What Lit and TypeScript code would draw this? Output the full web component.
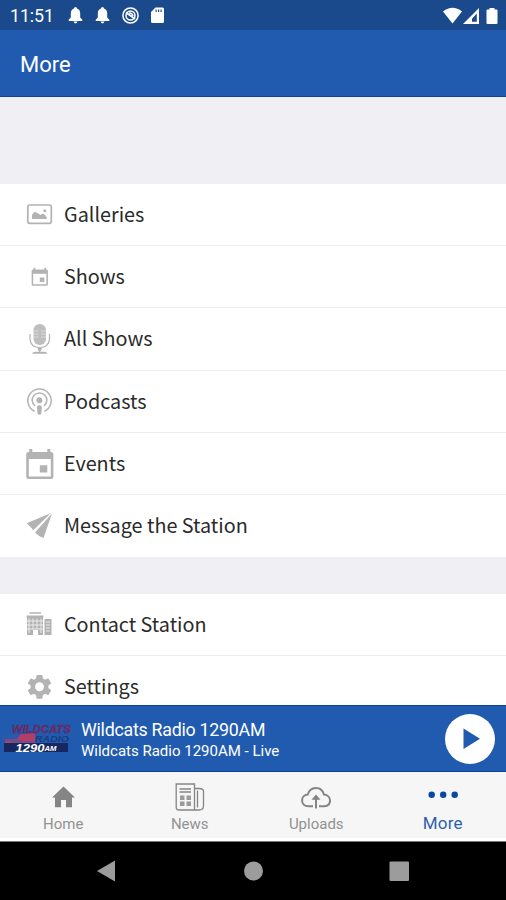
import { LitElement, html, css, svg } from "lit";
import { customElement } from "lit/decorators.js";

// Menu icons share a 40x40 box whose origin is its centre.
const calendar = svg`<path fill-rule="evenodd" d="M-10.5-15h3v3h15v-3h3v3h.6Q13.600-12 13.600-9.500V12.500Q13.600 15 11 15H-11Q-13.600 15-13.600 12.500V-9.500Q-13.600-12-11-12h.5zM-11-5V12.500H11V-5zM0 1.200H7.500V8.500H0z"/>`;

const menuIcons = {
  gallery: svg`<rect x="-11.200" y="-9" width="23.500" height="18.300" rx="2" fill="none" stroke="currentColor" stroke-width="1.700"/><path d="M-7 5V1Q-5-3.500-2.500-1.500L1.500 1Q3.500-1 5.500 .5L7.700 3V5z"/><circle cx="5.800" cy="-3.300" r="1.500"/>`,
  shows: svg`<g transform="translate(.8 -.2) scale(.6)">${calendar}</g>`,
  mic: svg`<g transform="translate(.5 0)"><rect x="-6" y="-15" width="12.500" height="21" rx="6.200" opacity=".85"/><path d="M-6-8H-1M1.500-8H6.500M-6-5H-1M1.500-5H6.500M-6-2H-1M1.500-2H6.500" stroke="#eee" stroke-width=".6"/><path d="M-9.500-5V0Q-9 8.500 .2 8.500T10-0V-5M.2 8.500V13" fill="none" stroke="currentColor" stroke-width="1.200"/><path d="M-2 9H2.500L1.300 12H-1zM-7.500 14.700Q-7 12.700-4 12.700H4.500Q7.500 12.700 8 14.700z"/></g>`,
  podcast: svg`<g transform="translate(.4 0)"><g fill="none" stroke="currentColor" stroke-width="1.500"><path d="M-4.800 10.300A11.700 11.700 0 1 1 5 10.300"/><path d="M-4.300 5A7.300 7.300 0 1 1 4.500 5"/></g><circle cy="-.8" r="3"/><path d="M-2.500 6Q-2.500 4.200 0 4.200T2.500 6L1.800 13Q0 14.500-1.800 13z"/></g>`,
  events: svg`<g transform="translate(.8 0)">${calendar}</g>`,
  plane: svg`<path d="M-12.300-2.700L12-13L-5.800 4.200L-7 2.500zM13-12.500L4.500 12L1 10.500L-3 7.500L-3.800 6.200z"/>`,
  building: svg`<path d="M-9.500-12.800H2V-11.200H-9.500zM-12.500-9.500H4.500V-7.800H-12.500z"/><path fill-rule="evenodd" d="M-12-8H4V10H-1V5H-6V10H-12z"/><path d="M5.500-6H12.500V10H5.500z"/><path d="M-10-6.500V8M-6-6.500V4M-2-6.500V4M2-6.500V8M-12-4H4M-12 0H4M-12 4H4M7-3H11M7 0H11M7 3H11M7 6H11" stroke="#fff" stroke-width="1" opacity=".75"/>`,
  gear: svg`<path transform="translate(-14.400 -15.100) scale(1.240)" d="M19.140 12.940c.04-.3.060-.61.060-.94s-.02-.64-.07-.94l2.030-1.580c.18-.14.230-.41.120-.61l-1.920-3.320c-.12-.22-.37-.29-.59-.22l-2.390.960c-.5-.38-1.030-.7-1.620-.94l-.36-2.540c-.04-.24-.24-.41-.48-.41h-3.840c-.24 0-.43.170-.47.410l-.36 2.540c-.59.240-1.130.570-1.620.940l-2.390-.96c-.22-.08-.47 0-.59.220L2.740 8.870c-.12.210-.08.470.120.610l2.030 1.580c-.05.3-.09.630-.09.940s.02.640.070.940l-2.030 1.580c-.18.140-.23.410-.12.610l1.920 3.320c.12.220.37.290.590.220l2.390-.96c.5.380 1.030.7 1.620.940l.36 2.540c.05.240.240.410.480.410h3.840c.24 0 .44-.17.470-.41l.36-2.540c.59-.24 1.130-.56 1.620-.94l2.390.960c.22.080.470 0 .59-.22l1.920-3.320c.12-.22.070-.47-.12-.61l-2.010-1.580zM12 15.600a3.600 3.600 0 1 1 0-7.200 3.600 3.600 0 0 1 0 7.200z"/>`,
};

const bell = svg`<path d="M7.500 0q1.500 0 1.500 1.600 3.200 1 3.200 5v4L14.300 12.800v1.200H.700v-1.200l2.100-2.200v-4q0-4 3.200-5Q6 0 7.500 0zM5.500 14.600h4q-.3 1.800-2 1.800t-2-1.800z"/>`;

type Row = [keyof typeof menuIcons, string];
const mainRows: Row[] = [
  ["gallery", "Galleries"],
  ["shows", "Shows"],
  ["mic", "All Shows"],
  ["podcast", "Podcasts"],
  ["events", "Events"],
  ["plane", "Message the Station"],
];
const stationRows: Row[] = [
  ["building", "Contact Station"],
  ["gear", "Settings"],
];

const tabs = [
  {
    label: "Home",
    icon: svg`<path d="M20.500 3.500L32 14.500H29V24.300H23V17H18V24.300H12V14.500H9z"/>`,
  },
  {
    label: "News",
    icon: svg`<g fill="none" stroke="currentColor" stroke-width="1.300"><path d="M6.200 1H24.500V27H9Q6.200 27 6.200 24zM24.500 5.500H29Q33.500 5.500 33.500 8.500V23Q33.500 27 29 27H24.500M27.500 7.500V24.500"/><path d="M9.500 6H21M9.500 9H21"/></g><path d="M10 12.500h4.500v4.500h-4.500zM16.500 12.500h4.500v4.500h-4.500zM10 18.500h4.500v4.500h-4.500zM16.500 18.500h4.500v4.500h-4.500z" opacity=".8"/>`,
  },
  {
    label: "Uploads",
    icon: svg`<g fill="none" stroke="currentColor" stroke-width="2"><path d="M17 23.300H12.500C4 23.300 4 12 11.800 11.500C14 3 25.500 2.500 28 11.500C36 12 36 23.300 28.500 23.300H23"/><path d="M20 25.500V15"/></g><path d="M20 11.500L24.500 16.800H15.500z"/>`,
  },
  {
    label: "More",
    icon: svg`<circle cx="8.700" cy="11.800" r="3.200"/><circle cx="20.200" cy="11.800" r="3.200"/><circle cx="31.700" cy="11.800" r="3.200"/>`,
  },
];

@customElement("app-root")
export class AppRoot extends LitElement {
  static styles = css`
    :host { display: flex; flex-direction: column; width: 506px; height: 900px; overflow: hidden; background: #efeff4; font-family: Roboto, sans-serif; }
    * { box-sizing: border-box; }
    svg { display: block; fill: currentColor; flex: none; }
    .status { flex: none; height: 30px; background: #1a4a8b; color: #fff; display: flex; align-items: center; padding: 1px 7px 0 10px; }
    .clock { font-size: 17.800px; letter-spacing: -.1px; width: 58px; }
    .notices { display: flex; gap: 12px; flex: 1; }
    .title { flex: none; height: 67px; background: #215bb0; border-bottom: 1px solid #0c459c; color: #fff; display: flex; align-items: center; padding: 3px 0 0 20px; font-size: 22px; }
    .list { flex: 1; min-height: 0; overflow: hidden; padding-top: 86.700px; }
    .group { background: #fff; margin-bottom: 36.500px; }
    .row { height: 62.300px; display: flex; align-items: center; padding-left: 19px; color: #b3b3b3; border-bottom: 1.500px solid #ededf0; }
    .group .row:last-child { border-bottom-color: transparent; }
    .name { margin: -1px 0 0 5px; font: 19.800px/30px "Noto Sans CJK SC", sans-serif; color: #2a2a2a; }
    .player { flex: none; height: 67px; background: #215bb0; border: solid #0a429d; border-width: 1px 0; color: #fff; display: flex; align-items: center; padding: 0 11px 0 3px; }
    .art { width: 70px; height: 34px; }
    .track { flex: 1; margin-left: 8px; padding-top: 1px; }
    .song { font-size: 17.800px; line-height: 24px; letter-spacing: -.25px; }
    .live { font-size: 15px; line-height: 19px; }
    .play { width: 50px; height: 50px; border-radius: 50%; background: #fff; color: #215bb0; }
    .tabs { flex: none; height: 70px; background: #f6f6f6; display: flex; border-bottom: 1px solid #777; box-shadow: inset 0 -3px #fff; }
    .tab { flex: 1; display: flex; flex-direction: column; align-items: center; padding-top: 11px; color: #858585; }
    .tab svg { width: 40px; height: 30px; }
    .label { font-size: 15px; line-height: 20px; margin-top: 1px; color: #929292; }
    .tab:last-child { color: #0a47a3; }
    .tab:last-child .label { color: #2f5fae; font-size: 17px; line-height: 19px; letter-spacing: .2px; }
    .keys { flex: none; height: 58px; background: #000; color: #9c9c9c; }
    .art text { font-family: "Liberation Sans", sans-serif; font-weight: 700; font-style: italic; }
  `;

  private rows(rows: Row[]) {
    return html`<div class="group">
      ${rows.map(([icon, name]) => html`<div class="row">
        <svg width="40" height="40" viewBox="-20 -20 40 40">${menuIcons[icon]}</svg><span class="name">${name}</span>
      </div>`)}
    </div>`;
  }

  render() {
    return html`
      <div class="status">
        <span class="clock">11:51</span>
        <div class="notices">
          <svg width="15" height="17" viewBox="0 0 15 17">${bell}</svg>
          <svg width="15" height="17" viewBox="0 0 15 17">${bell}</svg>
          <svg width="17" height="17" viewBox="0 0 17 17"><g fill="none" stroke="currentColor"><circle cx="8.500" cy="8.500" r="7.600" stroke-width="1.500"/><circle cx="8.500" cy="8.500" r="4.500" stroke-width="1.500"/><path d="M4 5.500L13 12M7 6Q10 5.500 11 9" stroke-width="1.600"/></g></svg>
          <svg width="13" height="17" viewBox="0 0 13 17"><path fill-rule="evenodd" d="M4.500 .5H11.500Q13 .5 13 2V14.500Q13 16 11.500 16H1.500Q0 16 0 14.500V5zM4.500 2.500V5H5.700V2.500zM7 2.500V5H8.200V2.500zM9.500 2.500V5H10.700V2.500z"/></svg>
        </div>
        <svg width="56" height="18" viewBox="0 0 56 18"><path d="M0 4.500Q9.500-3 19 4.500L9.500 16.500z"/><path fill-rule="evenodd" d="M36 1V17H20zM33.800 6.500L29 11.800V14.800H33.800z"/><path d="M46.500 1h5v1.500h2q1 0 1 1V16q0 1-1 1h-9q-1 0-1-1V3.500q0-1 1-1h2z"/></svg>
      </div>
      <div class="title">More</div>
      <div class="list">${this.rows(mainRows)}${this.rows(stationRows)}</div>
      <div class="player">
        <svg class="art" viewBox="0 0 70 34">
          <path d="M2 17Q16 16 18 12L32 11V21H2z" fill="#b23d68"/>
          <path d="M0 14H16L14 17H0zM2 18.500H18M8 20H31" fill="#215bb0" stroke="#3f58a5" stroke-width=".8"/>
          <text x="9" y="10.500" font-size="11" textLength="59" lengthAdjust="spacingAndGlyphs" fill="#8b2c62" stroke="#3a2a6a" stroke-width=".4">WILDCATS</text>
          <text x="32" y="20.400" font-size="8.500" textLength="34" lengthAdjust="spacingAndGlyphs" fill="#183d80">RADIO</text>
          <path d="M1 21H65V30H1z" fill="#16285f"/>
          <text x="12.500" y="29.600" font-size="11" textLength="29" lengthAdjust="spacingAndGlyphs" fill="#fff">1290</text>
          <text x="41.500" y="29.400" font-size="6.500" textLength="12" lengthAdjust="spacingAndGlyphs" fill="#fff">AM</text>
        </svg>
        <div class="track"><div class="song">Wildcats Radio 1290AM</div><div class="live">Wildcats Radio 1290AM - Live</div></div>
        <svg class="play" viewBox="0 0 50 50"><path d="M18.500 14.500L35 24.800L18.500 35z"/></svg>
      </div>
      <div class="tabs">
        ${tabs.map((t) => html`<div class="tab"><svg viewBox="0 0 40 30">${t.icon}</svg><span class="label">${t.label}</span></div>`)}
      </div>
      <div class="keys">
        <svg width="506" height="58" viewBox="0 0 506 58"><path d="M97 29L115 18.500V39.500z"/><circle cx="253.500" cy="29" r="9.500"/><rect x="389.500" y="19.500" width="19.500" height="19.500" rx="1"/></svg>
      </div>
    `;
  }
}
